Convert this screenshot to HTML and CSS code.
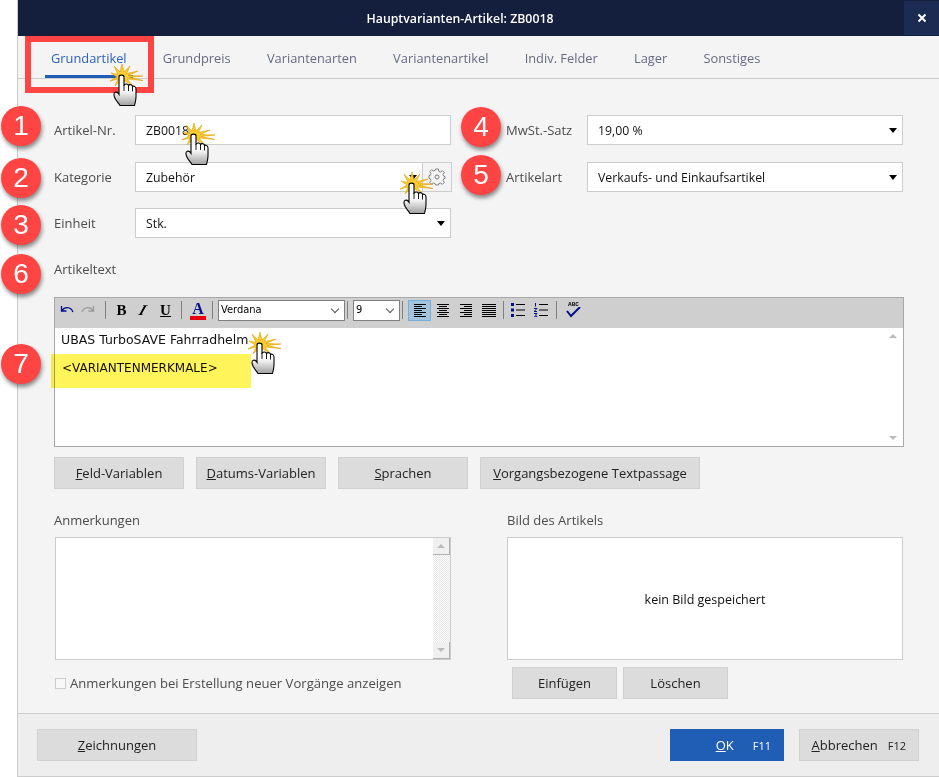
FILE: index.html
```html
<!DOCTYPE html>
<html lang="de">
<head>
    <meta charset="UTF-8">
    <title>Hauptvarianten-Artikel: ZB0018</title>
    <link rel="stylesheet" href="styles.css">
</head>
<body>

<svg class="defs" width="0" height="0">
    <defs>
        <linearGradient id="handfill" x1="0" y1="0" x2="0" y2="1">
            <stop offset="0.5" stop-color="#fff"/>
            <stop offset="1" stop-color="#a0a0a0"/>
        </linearGradient>
        <symbol id="click" viewBox="0 0 34 42">
            <polygon points="12,0 14,8 20,2 16.500,9.500 28,7 18,11.500 33,12 19,13.500 33,16.500 17,15 22,21 14,16.500 12,24 10,17 5,22 8,15 0,17 7,13 1,9 8,10.500 4,2 10,8" fill="#f9cc2f" stroke="#e0a000" stroke-width="0.600"/>
            <path d="M9 13 C9 10.500 14 10.500 14 13 V21 C15.500 19.500 18 19.500 18.500 21.500 C19.500 20 22.500 20.500 22.500 22.500 C24 21.500 26 23 26 25 V33 C26 36 25 39 24.500 41.500 H10 C9 39 4.500 36 4 31 C3.700 28 6.500 27.500 8 29 L9 30.500 Z" fill="url(#handfill)" stroke="#000" stroke-width="1.100"/>
            <path d="M14 21 V27 M18.500 21.500 V27 M22.500 22.500 V27.500" fill="none" stroke="#000" stroke-width="0.900"/>
        </symbol>
    </defs>
</svg>

<div class="window">
    <div class="titlebar">
        <span class="title">Hauptvarianten-Artikel: ZB0018</span>
        <button class="close">
            <svg width="10" height="10" viewBox="0 0 10 10"><path d="M1.500 1.500 L8.500 8.500 M8.500 1.500 L1.500 8.500" stroke="#fff" stroke-width="2"/></svg>
        </button>
    </div>

    <div class="tabs">
        <div class="tab active">Grundartikel</div>
        <div class="tab">Grundpreis</div>
        <div class="tab">Variantenarten</div>
        <div class="tab">Variantenartikel</div>
        <div class="tab">Indiv. Felder</div>
        <div class="tab">Lager</div>
        <div class="tab">Sonstiges</div>
    </div>

    <div class="content">
        <div class="fields">
            <div class="field-col">
                <div class="form-row">
                    <label>Artikel-Nr.</label>
                    <div class="box">ZB0018</div>
                </div>
                <div class="form-row">
                    <label>Kategorie</label>
                    <div class="box-group">
                        <div class="box dropdown">Zubehör<span class="caret"></span></div>
                        <div class="gear-box">
                            <svg width="18" height="18" viewBox="0 0 18 18"><path d="M7.600 1 H10.400 L10.800 3.300 L12.500 4 L14.400 2.700 L16.300 4.600 L15 6.500 L15.700 8.200 L17 8.600 V10.400 L15.700 10.800 L15 12.500 L16.300 14.400 L14.400 16.300 L12.500 15 L10.800 15.700 L10.400 17 H7.600 L7.200 15.700 L5.500 15 L3.600 16.300 L1.700 14.400 L3 12.500 L2.300 10.800 L1 10.400 V7.600 L2.300 7.200 L3 5.500 L1.700 3.600 L3.600 1.700 L5.500 3 L7.200 2.300 Z" fill="none" stroke="#808080"/><circle cx="9" cy="9" r="2" fill="none" stroke="#808080"/></svg>
                        </div>
                    </div>
                </div>
                <div class="form-row">
                    <label>Einheit</label>
                    <div class="box dropdown">Stk.<span class="caret"></span></div>
                </div>
            </div>
            <div class="field-col">
                <div class="form-row">
                    <label>MwSt.-Satz</label>
                    <div class="box dropdown">19,00 %<span class="caret"></span></div>
                </div>
                <div class="form-row">
                    <label>Artikelart</label>
                    <div class="box dropdown">Verkaufs- und Einkaufsartikel<span class="caret"></span></div>
                </div>
            </div>
        </div>

        <div class="section-label text-label">Artikeltext</div>

        <div class="editor">
            <div class="toolbar">
                <svg class="tb-icon" width="18" height="14" viewBox="0 0 18 14"><path d="M3.500 3 V8 H8.500 M3.800 7.800 C6.500 3.500 12.500 3.500 15 9" fill="none" stroke="#000f8c" stroke-width="1.300"/></svg>
                <svg class="tb-icon" width="18" height="14" viewBox="0 0 18 14"><path d="M14.500 3 V8 H9.500 M14.200 7.800 C11.500 3.500 5.500 3.500 3 9" fill="none" stroke="#9a9a9a" stroke-width="1.300"/></svg>
                <span class="tb-sep"></span>
                <span class="tb-btn bold">B</span>
                <span class="tb-btn italic">I</span>
                <span class="tb-btn under">U</span>
                <span class="tb-sep"></span>
                <span class="tb-color">A</span>
                <span class="tb-sep"></span>
                <div class="tb-select font">Verdana<span class="chev"></span></div>
                <span class="tb-sep tight"></span>
                <div class="tb-select size">9<span class="chev"></span></div>
                <span class="tb-sep tight"></span>
                <span class="tb-align on">
                    <svg width="12" height="13" viewBox="0 0 12 13"><path d="M0 .5 H12 M0 2.500 H8 M0 4.500 H12 M0 6.500 H8 M0 8.500 H12 M0 10.500 H8 M0 12.500 H12" stroke="#000"/></svg>
                </span>
                <span class="tb-align">
                    <svg width="12" height="13" viewBox="0 0 12 13"><path d="M0 .5 H12 M2 2.500 H10 M0 4.500 H12 M2 6.500 H10 M0 8.500 H12 M2 10.500 H10 M0 12.500 H12" stroke="#000"/></svg>
                </span>
                <span class="tb-align">
                    <svg width="12" height="13" viewBox="0 0 12 13"><path d="M0 .5 H12 M4 2.500 H12 M0 4.500 H12 M4 6.500 H12 M0 8.500 H12 M4 10.500 H12 M0 12.500 H12" stroke="#000"/></svg>
                </span>
                <span class="tb-align">
                    <svg width="14" height="13" viewBox="0 0 14 13"><path d="M0 .5 H14 M0 2.500 H14 M0 4.500 H14 M0 6.500 H14 M0 8.500 H14 M0 10.500 H14 M0 12.500 H14" stroke="#000"/></svg>
                </span>
                <span class="tb-sep after-align"></span>
                <svg class="tb-list" width="14" height="14" viewBox="0 0 14 14"><path d="M0 0 H3 V3 H0 Z M0 5.500 H3 V8.500 H0 Z M0 11 H3 V14 H0 Z" fill="#000f8c"/><path d="M5 1.500 H14 M5 7 H14 M5 12.500 H14" stroke="#000"/></svg>
                <svg class="tb-list" width="14" height="14" viewBox="0 0 14 14"><path d="M1.500 0 V3.500 M0 5.500 H3 L0 8.500 H3 M0 10.500 H3 L1.500 12 L3 13.800 H0" fill="none" stroke="#000f8c"/><path d="M5 1.500 H14 M5 7 H14 M5 12.500 H14" stroke="#000"/></svg>
                <span class="tb-sep"></span>
                <span class="tb-spell">
                    <span class="abc">ABC</span>
                    <svg width="15" height="11" viewBox="0 0 15 11"><path d="M1 4 L5 9 L14 0" fill="none" stroke="#000f8c" stroke-width="2"/></svg>
                </span>
            </div>
            <div class="editor-body">
                <div class="editor-scroll">
                    <p class="line-one">UBAS TurboSAVE Fahrradhelm</p>
                    <p class="line-two">&lt;VARIANTENMERKMALE&gt;</p>
                </div>
                <div class="scrollbar plain">
                    <span class="up"></span>
                    <span class="down"></span>
                </div>
            </div>
        </div>

        <div class="var-buttons">
            <button class="btn w130"><u>F</u>eld-Variablen</button>
            <button class="btn w130"><u>D</u>atums-Variablen</button>
            <button class="btn w130"><u>S</u>prachen</button>
            <button class="btn w220"><u>V</u>organgsbezogene Textpassage</button>
        </div>

        <div class="lower">
            <div class="lower-col">
                <div class="section-label">Anmerkungen</div>
                <div class="notes">
                    <div class="scrollbar">
                        <span class="up btn-face"></span>
                        <span class="down btn-face"></span>
                    </div>
                </div>
                <div class="check-row">
                    <span class="check"></span>
                    <span>Anmerkungen bei Erstellung neuer Vorgänge anzeigen</span>
                </div>
            </div>
            <div class="lower-col">
                <div class="section-label">Bild des Artikels</div>
                <div class="picture">kein Bild gespeichert</div>
                <div class="picture-buttons">
                    <button class="btn w105">Einfügen</button>
                    <button class="btn w105">Löschen</button>
                </div>
            </div>
        </div>
    </div>

    <div class="footer">
        <button class="btn w160"><u>Z</u>eichnungen</button>
        <div class="footer-right">
            <button class="btn ok"><span><u>O</u>K</span><span class="key">F11</span></button>
            <button class="btn cancel"><span><u>A</u>bbrechen</span><span class="key">F12</span></button>
        </div>
    </div>
</div>

<!-- Markierungen aus der Anleitung -->
<div class="tab-frame"></div>
<div class="highlight"></div>
<div class="num n1">1</div>
<div class="num n2">2</div>
<div class="num n3">3</div>
<div class="num n4">4</div>
<div class="num n5">5</div>
<div class="num n6">6</div>
<div class="num n7">7</div>
<svg class="click c1"><use href="#click"/></svg>
<svg class="click c2"><use href="#click"/></svg>
<svg class="click c3"><use href="#click"/></svg>
<svg class="click c4"><use href="#click"/></svg>

</body>
</html>
```

FILE: styles.css
```css
body {
    margin: 0;
    width: 939px;
    height: 777px;
    overflow: hidden;
    position: relative;
    background-color: #fff;
    font-family: "Open Sans", "Noto Sans", sans-serif;
    font-size: 12.5px;
    color: #222;
}
.defs {
    position: absolute;
}
button {
    font-family: inherit;
    font-size: inherit;
}
.window {
    margin-left: 17px;
    width: 922px;
    height: 777px;
    box-sizing: border-box;
    border-left: 1px solid #ccc;
    border-bottom: 1px solid #ccc;
    background-color: #f4f4f4;
    display: flex;
    flex-direction: column;
}
.titlebar {
    height: 36px;
    flex: none;
    box-sizing: border-box;
    padding-right: 37px;
    background-color: #141f3d;
    color: #fff;
    display: flex;
    align-items: center;
    justify-content: center;
    position: relative;
    font-weight: 600;
    font-size: 12.300px;
}
.close {
    position: absolute;
    right: 0;
    top: 1px;
    width: 35px;
    height: 34px;
    border: 0;
    padding: 0;
    background-color: #1c2b52;
    display: flex;
    align-items: center;
    justify-content: center;
}
.tabs {
    height: 43px;
    flex: none;
    box-sizing: border-box;
    border-bottom: 1px solid #ccc;
    padding-left: 27px;
    display: flex;
    gap: 24.200px;
}
.tab {
    height: 42px;
    box-sizing: border-box;
    padding: 0 6px;
    line-height: 45px;
    font-size: 12.850px;
    color: #666b85;
    white-space: nowrap;
}
.tab.active {
    color: #2c62bd;
    border-bottom: 3px solid #205db5;
}
.content {
    flex: 1;
    padding: 36px 36px 0 36px;
}
.fields {
    display: flex;
    gap: 55px;
    height: 123px;
}
.field-col {
    width: 397px;
    display: flex;
    flex-direction: column;
    gap: 17px;
}
.form-row {
    display: flex;
    align-items: center;
    height: 30px;
}
.form-row label {
    flex: none;
    width: 81px;
    font-size: 13px;
    color: #4c4c4c;
}
.form-row:nth-child(3) {
    margin-top: -1px;
}
.box {
    flex: 1;
    height: 30px;
    box-sizing: border-box;
    background-color: #fff;
    border: 1px solid #ccc;
    padding-left: 10px;
    line-height: 29px;
    font-size: 12.300px;
    color: #111;
    position: relative;
}
.box-group {
    flex: 1;
    display: flex;
}
.caret {
    position: absolute;
    right: 5px;
    top: 12px;
    width: 0;
    height: 0;
    border-left: 4.500px solid transparent;
    border-right: 4.500px solid transparent;
    border-top: 5px solid #000;
}
.gear-box {
    width: 29px;
    height: 30px;
    box-sizing: border-box;
    border: 1px solid #ccc;
    border-left: 0;
    margin-right: -1px;
    display: flex;
    align-items: center;
    justify-content: center;
}
.section-label {
    font-size: 13px;
    color: #4c4c4c;
}
.text-label {
    margin-top: 22px;
    height: 37px;
    line-height: 18px;
}
.editor {
    width: 850px;
    height: 150px;
    box-sizing: border-box;
    border: 1px solid #a8a8a8;
    background-color: #fff;
    display: flex;
    flex-direction: column;
}
.toolbar {
    height: 30px;
    flex: none;
    box-sizing: border-box;
    padding: 0 0 6px 3px;
    background-color: #cfcfcf;
    display: flex;
    align-items: center;
}
.tb-icon {
    margin-right: 3px;
}
.tb-sep {
    width: 1px;
    height: 18px;
    background-color: #808080;
    margin: 0 5px;
    flex: none;
}
.tb-sep.tight {
    margin-left: 2px;
}
.tb-sep.after-align {
    margin-left: 3px;
}
.tb-btn {
    width: 21px;
    text-align: center;
    font-family: "Liberation Serif", serif;
    font-weight: bold;
    font-size: 15px;
    color: #000;
}
.italic {
    font-style: italic;
    transform: skewX(-20deg);
}
.under {
    margin-left: 2px;
    text-decoration: underline;
}
.tb-color {
    width: 16px;
    height: 15px;
    margin: 0 1px 0 3px;
    text-align: center;
    border-bottom: 4px solid #e8000f;
    font-family: "Liberation Serif", serif;
    font-weight: bold;
    font-size: 16px;
    line-height: 15px;
    color: #000f8c;
}
.tb-select {
    height: 21px;
    box-sizing: border-box;
    border: 1px solid #808080;
    background-color: #fff;
    font-family: "DejaVu Sans Condensed", "DejaVu Sans", sans-serif;
    font-size: 11px;
    line-height: 18px;
    padding-left: 2px;
    position: relative;
    color: #000;
}
.tb-select.font {
    width: 127px;
}
.tb-select.size {
    width: 47px;
}
.chev {
    position: absolute;
    right: 6px;
    top: 5px;
    width: 5px;
    height: 5px;
    border-right: 1px solid #555;
    border-bottom: 1px solid #555;
    transform: rotate(45deg);
}
.tb-align {
    width: 23px;
    height: 21px;
    box-sizing: border-box;
    display: flex;
    align-items: center;
    justify-content: center;
    flex: none;
}
.tb-align.on {
    background-color: #a4c4de;
    border: 1px solid #76aede;
}
.tb-list {
    margin: 0 3px 0 2px;
}
.tb-list + .tb-list {
    margin-left: 6px;
}
.tb-spell {
    display: flex;
    flex-direction: column;
    align-items: center;
    margin-left: 4px;
    width: 15px;
}
.abc {
    font-family: "Liberation Mono", monospace;
    font-size: 6px;
    font-weight: bold;
    line-height: 6px;
    margin-bottom: -1px;
    color: #000;
}
.editor-body {
    flex: 1;
    display: flex;
}
.editor-scroll {
    flex: 1;
    padding: 2px 6px;
    font-family: "DejaVu Sans", sans-serif;
    font-size: 12px;
    color: #111;
}
.editor-scroll p {
    margin: 0;
    line-height: 20px;
}
.line-one {
    font-size: 12.500px;
}
.line-two {
    margin-top: 8px !important;
    padding-left: 1px;
}
.scrollbar {
    width: 16px;
    flex: none;
    position: relative;
    background-color: #fff;
}
.plain {
    margin-right: 2px;
}
.scrollbar .up,
.scrollbar .down {
    position: absolute;
    left: 0;
    width: 16px;
    height: 16px;
}
.scrollbar .up {
    top: 0;
}
.scrollbar .down {
    bottom: 0;
}
.scrollbar .up::after,
.scrollbar .down::after {
    content: "";
    position: absolute;
    left: 4px;
    border-left: 4px solid transparent;
    border-right: 4px solid transparent;
}
.scrollbar .up::after {
    top: 6px;
    border-bottom: 4px solid #bbb;
}
.scrollbar .down::after {
    bottom: 6px;
    border-top: 4px solid #bbb;
}
.var-buttons {
    display: flex;
    gap: 12px;
    margin-top: 10px;
}
.btn {
    height: 32px;
    box-sizing: border-box;
    border: 1px solid #d0d0d0;
    background-color: #dcdcdc;
    color: #222;
    padding: 0;
    flex: none;
    font-size: 13px;
}
.w130 {
    width: 130px;
}
.w220 {
    width: 220px;
}
.w105 {
    width: 105px;
}
.w160 {
    width: 160px;
}
.lower {
    display: flex;
    gap: 56px;
    margin-top: 22px;
}
.lower-col {
    width: 396px;
}
.lower .section-label {
    height: 26px;
    line-height: 18px;
}
.notes,
.picture {
    height: 123px;
    box-sizing: border-box;
    border: 1px solid #ccc;
    background-color: #fff;
}
.lower-col:first-child {
    margin-left: 1px;
}
.lower-col:first-child .section-label {
    margin-left: -1px;
}
.notes {
    display: flex;
    justify-content: flex-end;
}
.notes .scrollbar {
    background-color: #f0f0f0;
    background-image: repeating-conic-gradient(#e8e8e8 0 25%, #fcfcfc 0 50%);
    background-size: 2px 2px;
    width: 17px;
}
.notes .scrollbar .up,
.notes .scrollbar .down {
    width: 17px;
    height: 17px;
    box-sizing: border-box;
    background-color: #f0f0f0;
    border-right: 1px solid #b0b0b0;
    border-bottom: 1px solid #b0b0b0;
}
.picture {
    display: flex;
    align-items: center;
    justify-content: center;
    padding-top: 2px;
    color: #111;
}
.check-row {
    display: flex;
    align-items: center;
    gap: 4px;
    margin-top: 14px;
    height: 18px;
    font-size: 13.100px;
    color: #4c4c4c;
}
.check {
    width: 9px;
    height: 9px;
    border: 1px solid #ccc;
    background-color: #f8f8f8;
}
.picture-buttons {
    display: flex;
    gap: 6px;
    margin: 7px 0 0 5px;
}
.footer {
    height: 63px;
    flex: none;
    box-sizing: border-box;
    border-top: 1px solid #ccc;
    background-color: #eee;
    padding: 15px 20px 0 19px;
    display: flex;
    justify-content: space-between;
}
.footer-right {
    display: flex;
    gap: 15px;
}
.ok,
.cancel {
    display: flex;
    align-items: center;
    justify-content: flex-end;
    padding-right: 12px;
}
.ok {
    width: 114px;
    background-color: #205db5;
    border-color: #205db5;
    color: #fff;
    gap: 19px;
}
.cancel {
    width: 120px;
    gap: 10px;
}
.key {
    font-size: 11px;
}
.tab-frame {
    position: absolute;
    left: 25px;
    top: 36px;
    width: 117px;
    height: 45px;
    border: 6px solid #ff4444;
}
.highlight {
    position: absolute;
    left: 51px;
    top: 354px;
    width: 200px;
    height: 34px;
    background-color: #fff45a;
    mix-blend-mode: multiply;
}
.num {
    position: absolute;
    left: 1px;
    width: 40px;
    height: 40px;
    border-radius: 50%;
    background-color: #ff4444;
    color: #fff;
    font-family: "Liberation Sans", sans-serif;
    font-size: 28px;
    line-height: 40px;
    text-align: center;
    box-shadow: 1px 3px 4px rgba(0, 0, 0, 0.45);
}
.n1 { top: 106px; }
.n2 { top: 158px; }
.n3 { top: 205px; }
.n4 { top: 107px; left: 461px; }
.n5 { top: 155px; left: 461px; }
.n6 { top: 254px; }
.n7 { top: 344px; }
.click {
    position: absolute;
    width: 34px;
    height: 42px;
}
.c1 { left: 110px; top: 64px; }
.c2 { left: 182px; top: 123px; }
.c3 { left: 400px; top: 172px; }
.c4 { left: 248px; top: 332px; }
```
